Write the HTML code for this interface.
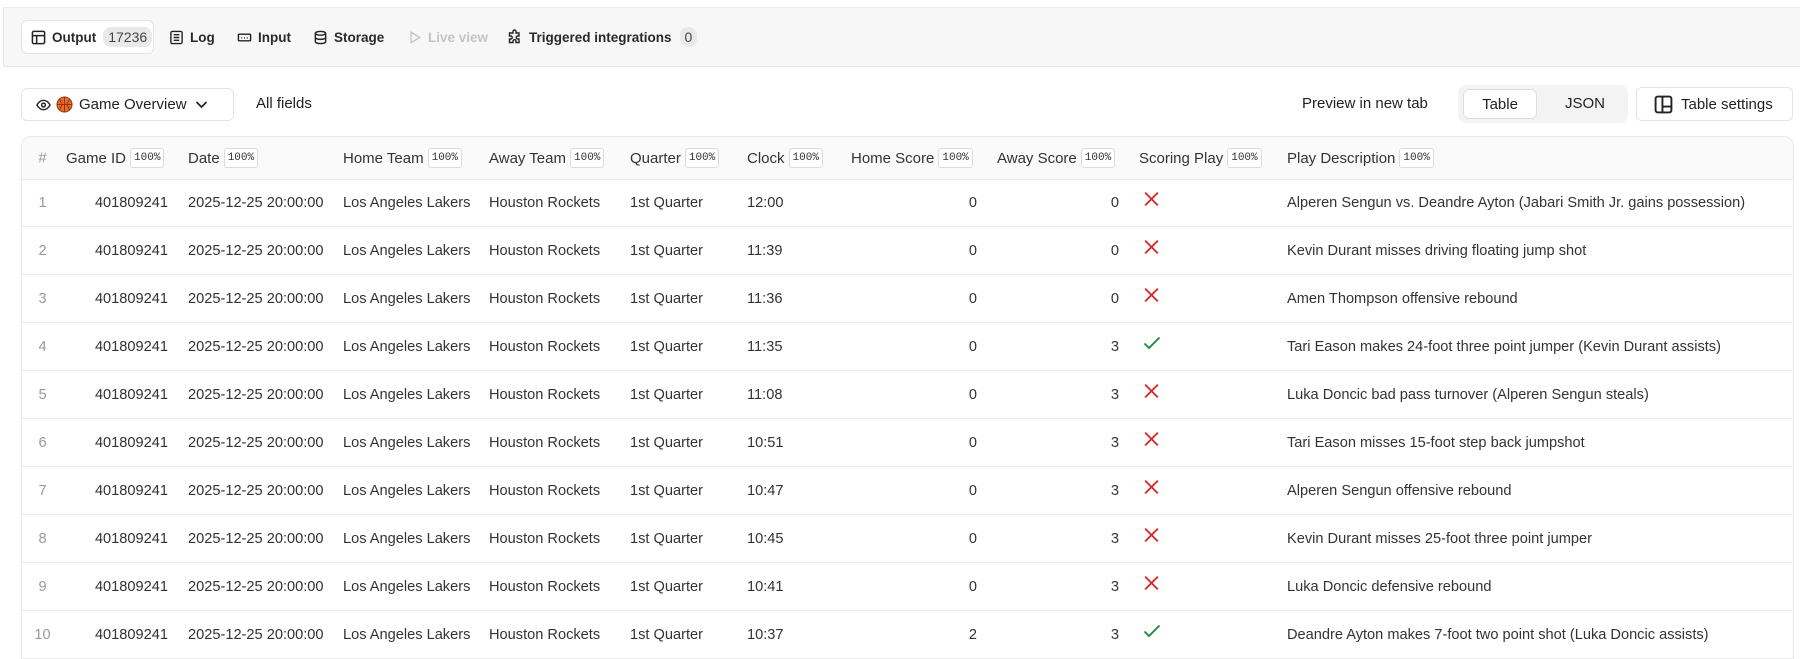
<!DOCTYPE html>
<html style="width:1800px;height:659px;overflow:hidden"><head><meta charset="utf-8">
<style>
*{box-sizing:border-box;margin:0;padding:0}
body{width:1800px;height:659px;overflow:hidden;background:#fff;font-family:"Liberation Sans",sans-serif;color:#222;position:relative}
.band{position:absolute;left:3px;right:0;top:7px;height:60px;background:#f7f7f7;border-top:1px solid #ececec;border-bottom:1px solid #e6e6e6;border-left:1px solid #e6e6e6}
.tab{position:absolute;top:20px;height:34px;display:flex;align-items:center;font-size:13.5px;font-weight:bold;color:#2a2a2a}
.tab svg{margin-right:6px}
.out{left:21px;width:133px;background:#fff;border:1px solid #e3e3e3;border-radius:6px;padding-left:9px}
.badge{background:#e9e9e9;border-radius:8px;padding:2px 5px;font-weight:normal;color:#444;margin-left:7px;font-size:14px}
.btn{position:absolute;background:#fff;border:1px solid #e3e3e3;border-radius:6px;display:flex;align-items:center;font-size:15px;color:#222}
.tbl{position:absolute;left:21px;top:136px;width:1773px;height:535px;border:1px solid #e8e8e8;border-radius:10px;overflow:hidden}
.hd{position:absolute;left:0;top:0;width:100%;height:43px;background:#fafafa;border-bottom:1px solid #e8e8e8}
.r{position:absolute;left:0;width:100%;height:48px;border-bottom:1px solid #ebebeb;font-size:14.6px;color:#333}
.r span,.hd span{position:absolute;top:50%;transform:translateY(-50%);white-space:nowrap}
.hd span{font-size:15px;color:#333;display:flex;align-items:center}
.hd b{font-weight:normal;font-family:"Liberation Mono",monospace;font-size:11px;border:1px solid #dcdcdc;background:#fff;border-radius:3px;padding:3px 3px;margin-left:4px;color:#333}
.n{color:#999;width:41px;text-align:center;left:0;justify-content:center}
.ra{text-align:right}
</style></head><body>
<div class="band"></div>
<div class="tab out"><svg width="15" height="15" viewBox="0 0 16 16" fill="none" stroke="#222" stroke-width="1.6"><rect x="1.5" y="1.5" width="13" height="13" rx="1.5"/><path d="M1.5 6h13M6 6v8.5"/></svg>Output<span class="badge">17236</span></div>
<div class="tab" style="left:169px"><svg width="15" height="15" viewBox="0 0 16 16" fill="none" stroke="#222" stroke-width="1.5"><rect x="2" y="1.5" width="12" height="13" rx="1.5"/><path d="M5 5h6M5 8h6M5 11h6"/></svg>Log</div>
<div class="tab" style="left:237px"><svg width="15" height="15" viewBox="0 0 16 16" fill="none" stroke="#222" stroke-width="1.5"><rect x="1.5" y="4.5" width="13" height="7" rx="1"/><path d="M4.5 8.5h1M7.5 8.5h1M10.5 8.5h1"/></svg>Input</div>
<div class="tab" style="left:313px"><svg width="15" height="15" viewBox="0 0 16 16" fill="none" stroke="#222" stroke-width="1.5"><ellipse cx="8" cy="3.5" rx="5.5" ry="2"/><path d="M2.5 3.5v9c0 1.1 2.5 2 5.5 2s5.5-.9 5.5-2v-9M2.5 8c0 1.1 2.5 2 5.5 2s5.5-.9 5.5-2"/></svg>Storage</div>
<div class="tab" style="left:408px;color:#c4c4c4"><svg width="14" height="15" viewBox="0 0 16 16" fill="none" stroke="#c4c4c4" stroke-width="1.5"><path d="M3.5 2l10 6-10 6z"/></svg>Live view</div>
<div class="tab" style="left:507px"><svg width="16" height="16" viewBox="0 0 16 16" fill="none" stroke="#222" stroke-width="1.4"><path d="M6 2.5a1.5 1.5 0 013 0V4h3v3h-1.3a1.5 1.5 0 000 3H12v3.5H9v-1.3a1.5 1.5 0 00-3 0v1.3H2.5V10h1.3a1.5 1.5 0 000-3H2.5V4H6z"/></svg>Triggered integrations<span class="badge" style="margin-left:8px;padding:2px 5px">0</span></div>

<div class="btn" style="left:21px;top:88px;width:213px;height:33px;padding-left:14px"><svg width="15" height="12" viewBox="0 0 16 12" fill="none" stroke="#222" stroke-width="1.5"><path d="M1 6c2-3.5 4.5-5 7-5s5 1.5 7 5c-2 3.5-4.5 5-7 5S3 9.5 1 6z"/><circle cx="8" cy="6" r="2"/></svg><svg style="margin:0 6px 0 5px" width="17" height="17" viewBox="0 0 18 18"><circle cx="9" cy="9" r="8" fill="#e8692a" stroke="#8a3410" stroke-width="1"/><path d="M1 9h16M9 1v16M3.5 3.5c3 3 3 8 0 11M14.5 3.5c-3 3-3 8 0 11" fill="none" stroke="#8a3410" stroke-width="1"/></svg>Game Overview<svg style="margin-left:8px" width="13" height="9" viewBox="0 0 13 9" fill="none" stroke="#222" stroke-width="1.7"><path d="M1.5 2l5 5 5-5"/></svg></div>
<div style="position:absolute;left:256px;top:95px;font-size:15px;color:#222">All fields</div>

<div style="position:absolute;left:1302px;top:95px;font-size:15px;color:#222">Preview in new tab</div>
<div style="position:absolute;left:1458px;top:85px;width:170px;height:38px;background:#f3f3f3;border-radius:8px"></div>
<div class="btn" style="left:1463px;top:89px;width:74px;height:30px;justify-content:center;border-color:#ddd">Table</div>
<div style="position:absolute;left:1565px;top:95px;font-size:15px;color:#222">JSON</div>
<div class="btn" style="left:1636px;top:87px;width:157px;height:34px;padding-left:17px"><svg style="margin-right:8px" width="19" height="19" viewBox="0 0 18 18" fill="none" stroke="#222" stroke-width="1.8"><rect x="1.5" y="1.5" width="15" height="15" rx="2"/><path d="M8 1.5v15M8 11h8.5"/></svg>Table settings</div>

<div class="tbl">
<div class="hd">
<span class="n" style="color:#999">#</span>
<span style="left:44px">Game ID<b>100%</b></span>
<span style="left:166px">Date<b>100%</b></span>
<span style="left:321px">Home Team<b>100%</b></span>
<span style="left:467px">Away Team<b>100%</b></span>
<span style="left:608px">Quarter<b>100%</b></span>
<span style="left:725px">Clock<b>100%</b></span>
<span style="left:829px">Home Score<b>100%</b></span>
<span style="left:975px">Away Score<b>100%</b></span>
<span style="left:1117px">Scoring Play<b>100%</b></span>
<span style="left:1265px">Play Description<b>100%</b></span>
</div>
<div id="rows"></div>
</div>
<script>
var d=[["12:00",0,0,0,"Alperen Sengun vs. Deandre Ayton (Jabari Smith Jr. gains possession)"],
["11:39",0,0,0,"Kevin Durant misses driving floating jump shot"],
["11:36",0,0,0,"Amen Thompson offensive rebound"],
["11:35",0,3,1,"Tari Eason makes 24-foot three point jumper (Kevin Durant assists)"],
["11:08",0,3,0,"Luka Doncic bad pass turnover (Alperen Sengun steals)"],
["10:51",0,3,0,"Tari Eason misses 15-foot step back jumpshot"],
["10:47",0,3,0,"Alperen Sengun offensive rebound"],
["10:45",0,3,0,"Kevin Durant misses 25-foot three point jumper"],
["10:41",0,3,0,"Luka Doncic defensive rebound"],
["10:37",2,3,1,"Deandre Ayton makes 7-foot two point shot (Luka Doncic assists)"]];
var X='<svg width="17" height="17" viewBox="0 0 16 16" fill="none" stroke="#d42a2a" stroke-width="1.8"><path d="M2 2l12 12M14 2L2 14"/></svg>';
var C='<svg width="18" height="14" viewBox="0 0 18 14" fill="none" stroke="#1f8a3a" stroke-width="1.9"><path d="M1.5 7.5l4.5 4.5L16.5 1.5"/></svg>';
var h='';
d.forEach(function(r,i){
h+='<div class="r" style="top:'+(42+i*48)+'px"><span class="n">'+(i+1)+'</span>'+
'<span class="ra" style="right:1625px">401809241</span>'+
'<span style="left:166px">2025-12-25 20:00:00</span>'+
'<span style="left:321px">Los Angeles Lakers</span>'+
'<span style="left:467px">Houston Rockets</span>'+
'<span style="left:608px">1st Quarter</span>'+
'<span style="left:725px">'+r[0]+'</span>'+
'<span class="ra" style="right:816px">'+r[1]+'</span>'+
'<span class="ra" style="right:674px">'+r[2]+'</span>'+
'<span style="left:1121px;top:42%;line-height:0">'+(r[3]?C:X)+'</span>'+
'<span style="left:1265px">'+r[4]+'</span></div>';});
document.getElementById('rows').innerHTML=h;
</script>
</body></html>
